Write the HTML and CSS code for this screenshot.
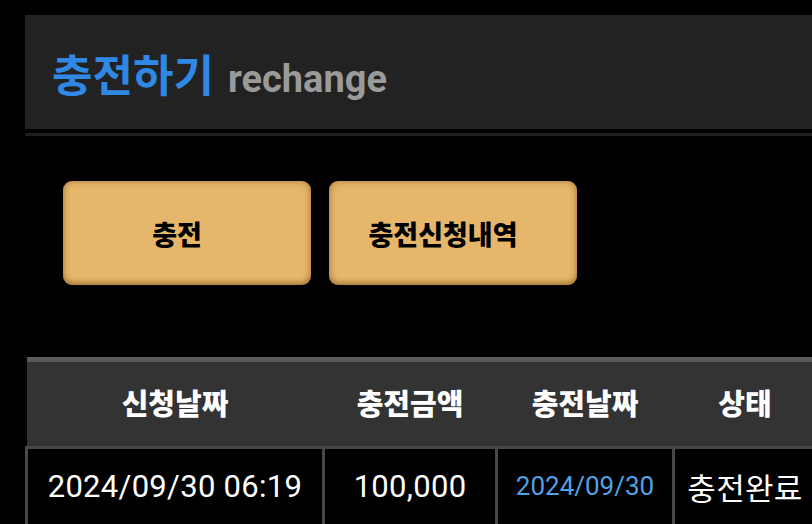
FILE: index.html
```html
<!DOCTYPE html>
<html lang="ko">
<head>
<meta charset="utf-8">
<title>충전하기</title>
<link rel="stylesheet" href="styles.css">
</head>
<body>
<div class="page">
  <header class="title-bar">
    <h1 class="title"><span class="title-ko">충전하기</span> <span class="title-en">rechange</span></h1>
  </header>
  <div class="rule"></div>

  <nav class="actions">
    <button class="btn" type="button">충전</button>
    <button class="btn" type="button">충전신청내역</button>
  </nav>

  <table class="history">
    <colgroup>
      <col class="c-req">
      <col class="c-amt">
      <col class="c-date">
      <col class="c-state">
    </colgroup>
    <thead>
      <tr>
        <th>신청날짜</th>
        <th>충전금액</th>
        <th>충전날짜</th>
        <th>상태</th>
      </tr>
    </thead>
    <tbody>
      <tr>
        <td>2024/09/30 06:19</td>
        <td>100,000</td>
        <td class="done-date">2024/09/30</td>
        <td>충전완료</td>
      </tr>
    </tbody>
  </table>
</div>
</body>
</html>
```
FILE: styles.css
```css
html, body {
  margin: 0;
  padding: 0;
  background: #000;
  overflow: hidden;
}

body {
  font-family: Roboto, "Noto Sans CJK KR", sans-serif;
  color: #fff;
}

.page {
  width: 788px;
  padding: 15px 0 0 25px;
}

/* page heading */
.title-bar {
  height: 114px;
  background: #222;
  display: flex;
  align-items: center;
  padding-left: 27px;
  box-sizing: border-box;
}

.title {
  margin: 0;
  font-weight: 700;
  line-height: 1;
  white-space: nowrap;
  padding-top: 4px;
  display: flex;
  align-items: baseline;
}

.title-ko {
  color: #2f88e3;
  font-size: 44px;
  font-family: "Noto Sans CJK KR", sans-serif;
}

.title-en {
  color: #9a9a9a;
  font-size: 38px;
  margin-left: 14px;
}

.rule {
  height: 3px;
  margin-top: 4px;
  background: #1f1f1f;
}

/* action buttons */
.actions {
  display: flex;
  gap: 18px;
  padding: 45px 0 0 38px;
}

.btn {
  width: 248px;
  height: 104px;
  border: 0;
  border-radius: 9px;
  background: #e6b66b;
  box-shadow: inset 0 0 7px rgba(120, 80, 20, 0.5), inset 0 -3px 5px rgba(120, 80, 20, 0.35);
  font-family: "Noto Sans CJK KR", sans-serif;
  font-weight: 900;
  font-size: 27px;
  color: #000;
  padding: 0 20px 0 0;
}

/* history table */
.history {
  margin-top: 72px;
  width: 790px;
  border-collapse: collapse;
  table-layout: fixed;
  border-top: 5px solid #5a5a5a;
}

.c-req { width: 297px; }
.c-amt { width: 173px; }
.c-date { width: 177px; }
.c-state { width: 143px; }

.history th {
  height: 80px;
  background: #333;
  font-family: "Noto Sans CJK KR", sans-serif;
  font-weight: 900;
  font-size: 29px;
  padding: 0 0 4px;
  border-bottom: 1px solid #1a1a1a;
}

.history td {
  height: 74px;
  border: 3px solid #484848;
  text-align: center;
  font-size: 31px;
  padding: 0 0 4px;
  letter-spacing: 0.3px;
}

.history td.done-date {
  color: #4fa2e6;
  font-size: 26px;
  letter-spacing: 0;
}
```
